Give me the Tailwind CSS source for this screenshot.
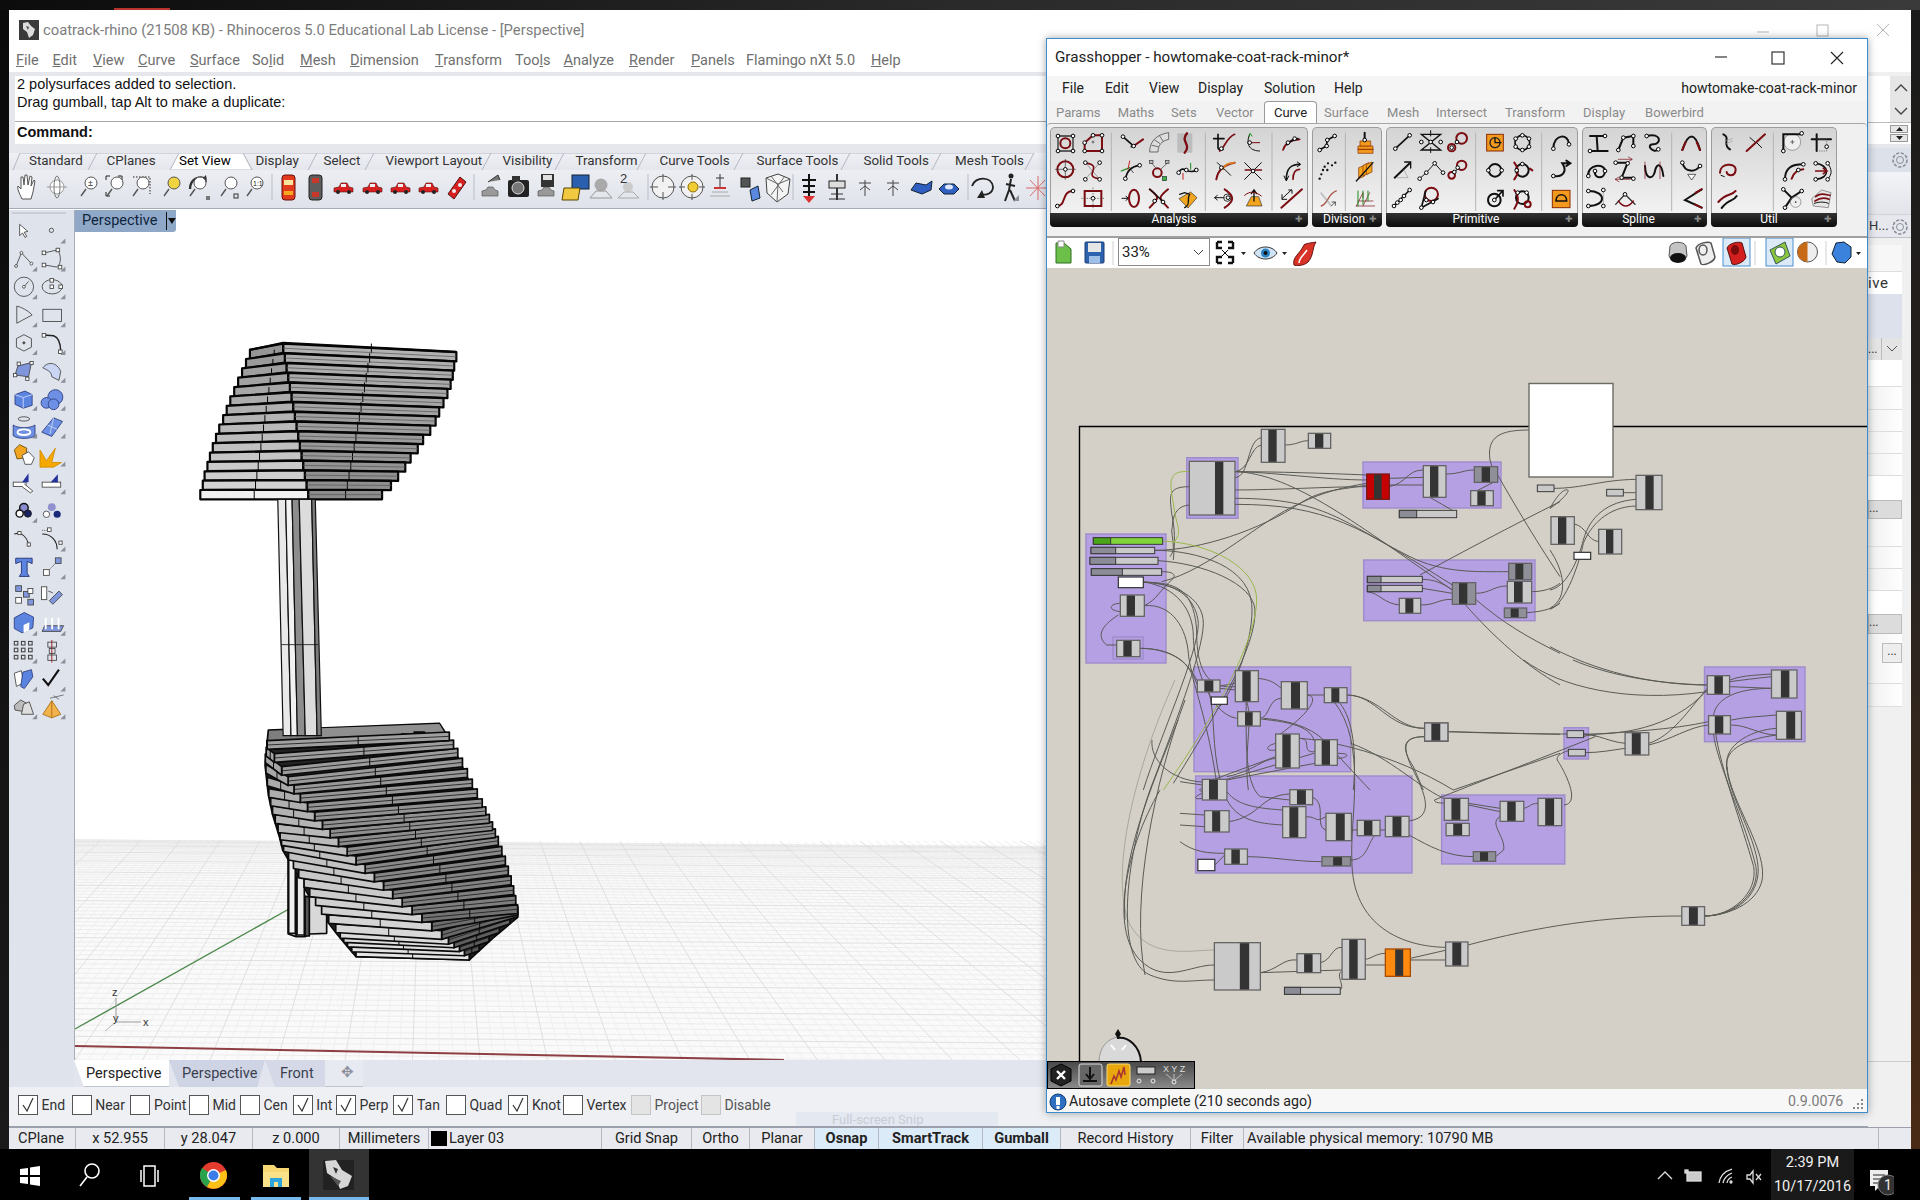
<!DOCTYPE html>
<html>
<head>
<meta charset="utf-8">
<script src="https://cdn.jsdelivr.net/npm/@tailwindcss/browser@4"></script>
</head>
<body class="bg-black">
<div class="relative w-[1920px] h-[1200px] overflow-hidden flex flex-col bg-black [font-family:Roboto,sans-serif] text-[14px] text-[#1c1c1c]">
  <!-- wallpaper strip -->
  <div class="h-[10px] shrink-0 relative bg-linear-to-r from-[#0c0c0c] via-[#2a2a2a] to-[#3a3a3a]">
    <div class="absolute left-[114px] top-[8px] w-[56px] h-[2px] bg-[#b8352d]"></div>
  </div>
  <div class="flex h-[1139px] shrink-0">
    <div class="w-[9px] bg-linear-to-b from-[#0a0a0a] to-[#1a1a1a]"></div>
    <!-- RHINO -->
    <div class="w-[1902px] flex flex-col bg-[#f0f0f0]">
      <div class="h-[40px] bg-white flex items-center pl-[10px] text-[#7d7d7d] text-[14.8px] relative">
        <svg width="20" height="20" viewBox="0 0 20 20" class="mr-[4px]"><rect width="20" height="20" fill="#3a3a3a"/><path d="M4 3 L9 2 L12 6 L16 9 L14 15 L10 18 L8 12 L4 9 Z" fill="#dcdcdc"/><path d="M7 6 L10 7 L9 10 Z" fill="#444"/></svg>
        <span>coatrack-rhino (21508 KB) - Rhinoceros 5.0 Educational Lab License - [Perspective]</span>
        <svg class="absolute left-[1743px] top-[8px]" width="150" height="24" viewBox="0 0 150 24" fill="none" stroke="#b5b5b5"><path d="M5 14 H17"/><rect x="65" y="7" width="11" height="11"/><path d="M125 6 L137 18 M137 6 L125 18"/></svg>
      </div>
      <div class="h-[22px] bg-white flex items-center pl-[7px] text-[14.5px] text-[#6f6f6f] whitespace-nowrap">
        <span class="w-[36.5px]"><u>F</u>ile</span><span class="w-[40.5px]"><u>E</u>dit</span><span class="w-[45px]"><u>V</u>iew</span><span class="w-[52px]"><u>C</u>urve</span><span class="w-[62px]"><u>S</u>urface</span><span class="w-[48px]">So<u>l</u>id</span><span class="w-[50px]"><u>M</u>esh</span><span class="w-[85px]"><u>D</u>imension</span><span class="w-[80px]"><u>T</u>ransform</span><span class="w-[48.5px]">Too<u>l</u>s</span><span class="w-[65.5px]"><u>A</u>nalyze</span><span class="w-[62px]"><u>R</u>ender</span><span class="w-[55px]"><u>P</u>anels</span><span class="w-[125px]">Flamingo nXt 5.0</span><span><u>H</u>elp</span>
      </div>
      <div class="flex h-[1055px]">
        <!-- main column -->
        <div class="w-[1859px] flex flex-col">
          <div class="h-[4px] bg-[#e6e7ec]"></div>
          <div class="h-[68px] bg-[#e6e7ec] pl-[6px]">
            <div class="h-full bg-white flex flex-col [font-family:'Liberation_Sans',sans-serif] text-[14.5px] text-[#111]">
              <div class="h-[46px] pl-[2px] leading-[17.5px] border-b border-[#a8a8a8]">
                <div>2 polysurfaces added to selection.</div>
                <div>Drag gumball, tap Alt to make a duplicate:</div>
              </div>
              <div class="h-[21px] pl-[2px] leading-[20px] font-bold">Command:</div>
            </div>
          </div>
          <div class="h-[9px] bg-[#e6e7ec]"></div>
          <!-- toolbar tabs -->
          <div class="h-[17px] relative bg-linear-to-b from-[#eef0f4] to-[#e4e6ed] text-[13.4px] text-[#333] flex items-center pl-[20px] whitespace-nowrap">
            <svg class="absolute left-0 top-0" width="1040" height="17" viewBox="9 153 1040 17" fill="none" stroke="#b4b8c4"><path d="M13 170 L20 153 H97 M88 170 L97 153 H179 M243 153 H317 M243 153 L252 170 M308 170 L317 153 H374 M365 170 L374 153 H491 M482 170 L491 153 H564 M555 170 L564 153 H646 M637 170 L646 153 H743 M734 170 L743 153 H850 M841 170 L850 153 H941 M932 170 L941 153 H1034 M1025 170 L1034 153"/><path d="M170 170 L179 153 H243 L252 170 Z" fill="#fff"/></svg>
            <span class="relative w-[77.5px]">Standard</span><span class="relative w-[72.5px]">CPlanes</span><span class="relative w-[76.5px] text-black">Set View</span><span class="relative w-[68px]">Display</span><span class="relative w-[62px]">Select</span><span class="relative w-[117px]">Viewport Layout</span><span class="relative w-[73px]">Visibility</span><span class="relative w-[84px]">Transform</span><span class="relative w-[97px]">Curve Tools</span><span class="relative w-[107px]">Surface Tools</span><span class="relative w-[91.6px]">Solid Tools</span><span class="relative">Mesh Tools</span>
          </div>
          <!-- toolbar icons -->
          <div class="h-[39px] bg-linear-to-b from-[#eceef3] to-[#dfe2ea] border-b border-[#a6abb8] relative">
            <svg id="rtools" class="absolute left-0 top-0" width="1037" height="38" viewBox="9 170 1037 38"></svg>
          </div>
          <div class="h-[1px] bg-white"></div>
          <!-- workspace -->
          <div class="flex h-[877px]">
            <div class="w-[65px] bg-[#dfe3ec] shrink-0">
              <svg width="65" height="520" viewBox="9 210 65 520">
                <path d="M12 213 H66" stroke="#b5b8c2"/>
                <g transform="translate(0 200) scale(0.35714)" fill="none" stroke="#444" stroke-width="2.4">
                  <path d="M55 68 L55 100 L63 92 L70 105 L75 102 L68 90 L78 88 Z" fill="#fff"/><circle cx="144" cy="85" r="6"/>
                  <path d="M45 185 L60 148 L88 178"/><path d="M125 148 L160 140 C172 150 172 180 160 188 L125 182" /><g fill="#fff"><rect x="118" y="143" width="10" height="10"/><rect x="157" y="135" width="10" height="10"/><rect x="118" y="177" width="10" height="10"/><rect x="163" y="183" width="10" height="10"/><circle cx="45" cy="185" r="4"/><circle cx="60" cy="148" r="4"/><circle cx="88" cy="178" r="4"/></g>
                  <circle cx="67" cy="243" r="27"/><path d="M67 243 L80 228"/><circle cx="67" cy="243" r="4" fill="#fff"/><ellipse cx="146" cy="243" rx="28" ry="20"/><g fill="#fff"><rect x="140" y="220" width="10" height="10"/><rect x="140" y="238" width="10" height="10"/><rect x="165" y="238" width="10" height="10"/></g>
                  <path d="M47 297 L47 345 L90 322 C80 310 60 300 47 297"/><rect x="120" y="306" width="52" height="34"/>
                  <path d="M67 377 L88 388 L88 412 L67 423 L46 412 L46 388 Z"/><circle cx="67" cy="400" r="3" fill="#444"/><path d="M122 378 L150 380 C165 385 170 400 170 425" stroke="#222" stroke-width="4"/><g fill="#fff"><rect x="118" y="374" width="10" height="10"/><rect x="164" y="420" width="10" height="10"/></g>
                  <path d="M50 465 L88 455 L80 495 L42 490Z" fill="#7f96dc"/><g fill="#fff"><rect x="48" y="454" width="9" height="9"/><rect x="84" y="452" width="9" height="9"/><rect x="38" y="486" width="9" height="9"/><rect x="72" y="496" width="9" height="9"/></g><path d="M120 470 C135 450 160 455 170 480 L165 505 L145 495 C145 480 130 475 120 470" fill="#c9d5f3"/>
                  <path d="M42 545 L70 535 L90 545 L90 575 L65 583 L42 572 Z" fill="#5b83e0" stroke="#2b3d7c"/><path d="M42 545 L65 553 L90 545 M65 553 L65 583" stroke="#cfdcff"/><circle cx="155" cy="552" r="21" fill="#6d90e4" stroke="#2b3d7c"/><circle cx="130" cy="568" r="15" fill="#6d90e4" stroke="#2b3d7c"/><circle cx="150" cy="572" r="15" fill="#6d90e4" stroke="#2b3d7c"/>
                  <ellipse cx="67" cy="613" rx="16" ry="6"/><path d="M37 630 C50 640 85 640 98 630 L98 660 C85 670 50 670 37 660Z" fill="#6d90e4" stroke="#2b3d7c"/><ellipse cx="67" cy="650" rx="18" ry="8" stroke="#fff" stroke-width="5"/><path d="M117 650 L150 610 L175 620 L145 662Z" fill="#6d90e4" stroke="#2b3d7c"/><path d="M133 630 L160 642 M150 610 L140 655" stroke="#c9d5f3"/>
                  <path d="M40 700 L55 685 L75 695 L72 722 L48 725 Z" fill="#f2a51e" stroke="#6b4a00"/><path d="M62 715 L80 705 L96 722 L88 740 L70 740 Z" fill="#fff"/><path d="M112 748 L112 700 L130 730 L155 695 L145 735 L172 735 L150 748Z" fill="#f5a800" stroke="#d08c00"/>
                  <rect x="37" y="790" width="36" height="12" fill="#fff"/><path d="M62 790 L80 765 L80 790Z" fill="#26329c" stroke="none"/><path d="M68 795 L92 815 L85 820 L62 803" fill="#fff"/><rect x="118" y="790" width="52" height="14" fill="#fff"/><path d="M142 790 L162 768 L162 790Z" fill="#26329c" stroke="none"/>
                  <circle cx="67" cy="862" r="12" fill="#8a8ad0" stroke="#111" stroke-width="4"/><circle cx="55" cy="878" r="10" fill="#fff" stroke="#111" stroke-width="4"/><circle cx="78" cy="878" r="10" fill="#1b2360" stroke="#111"/><circle cx="145" cy="860" r="11" fill="#9090d0" stroke="none"/><circle cx="130" cy="880" r="9" fill="#fff"/><circle cx="160" cy="880" r="10" fill="#1b2a78" stroke="none"/>
                  <path d="M40 935 L55 932 C70 940 80 955 80 970" stroke="#222" stroke-width="3"/><g fill="#fff"><rect x="50" y="928" width="9" height="9"/><rect x="76" y="960" width="9" height="9"/></g><path d="M118 925 H135" stroke-dasharray="3 3"/><path d="M118 935 C145 935 160 955 160 978" stroke="#222" stroke-width="3"/><rect x="133" y="918" width="10" height="10" fill="#fff"/><rect x="165" y="955" width="9" height="9" fill="#fff"/>
                  <path d="M44 1003 L90 1003 L90 1018 L76 1012 L76 1045 L82 1054 L54 1054 L60 1045 L60 1012 L44 1018Z" fill="#5b83e0" stroke="#1f2d6a"/><rect x="122" y="1035" width="16" height="16" fill="#fff"/><rect x="155" y="1002" width="16" height="16" fill="#7f96dc"/><path d="M138 1035 L155 1018" stroke-dasharray="3 2"/>
                  <rect x="44" y="1080" width="16" height="16" fill="#7f96dc"/><rect x="66" y="1096" width="16" height="16" fill="#7f96dc"/><rect x="78" y="1088" width="14" height="14" fill="#fff"/><rect x="44" y="1113" width="16" height="16" fill="#fff"/><rect x="78" y="1118" width="16" height="16" fill="#7f96dc"/><rect x="116" y="1083" width="15" height="36" fill="#fff"/><path d="M138 1122 L165 1095 L175 1105 L148 1132Z" fill="#7f96dc"/><path d="M135 1095 L148 1100"/>
                  <path d="M40 1170 L68 1155 L94 1168 L92 1198 L62 1212 L40 1200Z" fill="#5b83e0" stroke="#2b3d7c"/><path d="M66 1190 L82 1182 L82 1205 L66 1212Z" fill="#fff" stroke="none"/><path d="M118 1208 L170 1208 L178 1192 L125 1192Z" fill="#7f96dc"/><path d="M128 1202 V1170 M146 1202 V1170 M164 1202 V1170" stroke="#fff" stroke-width="5"/>
                  <g stroke-width="3"><rect x="40" y="1236" width="10" height="10"/><rect x="60" y="1236" width="10" height="10"/><rect x="80" y="1236" width="10" height="10"/><rect x="40" y="1255" width="10" height="10"/><rect x="60" y="1255" width="10" height="10"/><rect x="80" y="1255" width="10" height="10"/><rect x="40" y="1275" width="10" height="10"/><rect x="60" y="1275" width="10" height="10"/><rect x="80" y="1275" width="10" height="10"/></g><path d="M145 1232 V1295" stroke="#b03030" stroke-width="3"/><rect x="134" y="1238" width="24" height="14"/><rect x="138" y="1256" width="16" height="14"/><rect x="134" y="1274" width="24" height="15"/>
                  <path d="M40 1325 L60 1318 L66 1352 L46 1362Z" fill="#fff"/><path d="M64 1322 L88 1315 L92 1335 L68 1368 L58 1362Z" fill="#5b83e0" stroke="#2b3d7c"/><path d="M120 1340 L135 1358 L165 1315" stroke="#111" stroke-width="6"/>
                  <path d="M40 1415 L58 1400 L76 1410 L64 1432 L42 1428 Z" fill="#bbb"/><path d="M66 1412 L82 1405 L94 1440 L60 1440 Z" fill="#ddd"/><path d="M145 1402 L170 1440 L145 1450 L120 1440 Z" fill="#f2b34a" stroke="#a86a10"/><path d="M145 1402 V1450" stroke="#a86a10"/><path d="M140 1395 L178 1386 M150 1388 L165 1398" stroke="#666"/>
                </g>
                <g id="tris" transform="translate(0 200) scale(0.35714)" fill="#8a8f99"></g>
              </svg>
            </div>
            <div class="flex-1 flex flex-col">
              <div class="h-[850px] relative bg-white overflow-hidden border-l border-[#a8acb8]">
                <svg id="vp" class="absolute left-0 top-0" width="1000" height="850" viewBox="74 210 1000 850"></svg>
                <div class="absolute left-0 top-0 w-[101px] h-[22px] bg-[#8fa8c8] rounded-br-[3px] flex items-center pl-[7px] text-[14.5px] text-[#10243c]">
                  <span class="w-[86px]">Perspective</span>
                  <span class="w-[1px] h-[18px] bg-[#111]"></span>
                  <svg width="8" height="6" viewBox="0 0 8 6" class="ml-[1px]"><path d="M0 0 H8 L4 6 Z" fill="#111"/></svg>
                </div>
              </div>
              <div class="h-[27px] bg-[#e2e5ee] flex text-[14.5px] text-[#3a3f50]">
                <div class="w-[95px] bg-white pl-[12px] pt-[1px] flex items-center border-b border-[#c0c4d0] [clip-path:polygon(0_0,100%_0,100%_100%,10px_100%)] text-[#222]">Perspective</div>
                <div class="w-[96px] bg-[#cfd4e4] pl-[13px] pt-[1px] flex items-center [clip-path:polygon(0_0,100%_0,92%_100%,10px_100%)]">Perspective</div>
                <div class="w-[60px] bg-[#d5d9e7] pl-[15px] pt-[1px] flex items-center [clip-path:polygon(0_0,100%_0,100%_100%,10px_100%)]">Front</div>
                <div class="w-[38px] bg-[#e8eaf1] pl-[16px] flex items-center border-b border-[#c0c4d0] text-[#8b8f9c]">✥</div>
              </div>
            </div>
          </div>
          <!-- osnap -->
          <div class="h-[40px] bg-[#eff0f3] flex items-center pl-[9px] pb-[3px] text-[14px] text-[#333] whitespace-nowrap relative border-b border-[#9ba0ac]">
            <div class="w-[53.7px] flex items-center gap-[3.5px]"><span class="w-[20px] h-[20px] bg-white border border-[#555] flex items-center justify-center"><svg width="14" height="16" viewBox="0 0 14 16" fill="none" stroke="#333" stroke-width="1.2"><path d="M2 8 L6 14 L12 1"/></svg></span>End</div>
            <div class="w-[58.8px] flex items-center gap-[3.5px]"><span class="w-[20px] h-[20px] bg-white border border-[#555]"></span>Near</div>
            <div class="w-[58.5px] flex items-center gap-[3.5px]"><span class="w-[20px] h-[20px] bg-white border border-[#555]"></span>Point</div>
            <div class="w-[51px] flex items-center gap-[3.5px]"><span class="w-[20px] h-[20px] bg-white border border-[#555]"></span>Mid</div>
            <div class="w-[52.8px] flex items-center gap-[3.5px]"><span class="w-[20px] h-[20px] bg-white border border-[#555]"></span>Cen</div>
            <div class="w-[43.2px] flex items-center gap-[3.5px]"><span class="w-[20px] h-[20px] bg-white border border-[#555] flex items-center justify-center"><svg width="14" height="16" viewBox="0 0 14 16" fill="none" stroke="#333" stroke-width="1.2"><path d="M2 8 L6 14 L12 1"/></svg></span>Int</div>
            <div class="w-[57.5px] flex items-center gap-[3.5px]"><span class="w-[20px] h-[20px] bg-white border border-[#555] flex items-center justify-center"><svg width="14" height="16" viewBox="0 0 14 16" fill="none" stroke="#333" stroke-width="1.2"><path d="M2 8 L6 14 L12 1"/></svg></span>Perp</div>
            <div class="w-[52.5px] flex items-center gap-[3.5px]"><span class="w-[20px] h-[20px] bg-white border border-[#555] flex items-center justify-center"><svg width="14" height="16" viewBox="0 0 14 16" fill="none" stroke="#333" stroke-width="1.2"><path d="M2 8 L6 14 L12 1"/></svg></span>Tan</div>
            <div class="w-[62.5px] flex items-center gap-[3.5px]"><span class="w-[20px] h-[20px] bg-white border border-[#555]"></span>Quad</div>
            <div class="w-[54.5px] flex items-center gap-[3.5px]"><span class="w-[20px] h-[20px] bg-white border border-[#555] flex items-center justify-center"><svg width="14" height="16" viewBox="0 0 14 16" fill="none" stroke="#333" stroke-width="1.2"><path d="M2 8 L6 14 L12 1"/></svg></span>Knot</div>
            <div class="w-[68px] flex items-center gap-[3.5px]"><span class="w-[20px] h-[20px] bg-white border border-[#555]"></span>Vertex</div>
            <div class="w-[70px] flex items-center gap-[3.5px] text-[#555]"><span class="w-[20px] h-[20px] bg-[#e4e4e4] border border-[#c4c4c4]"></span>Project</div>
            <div class="flex items-center gap-[3.5px] text-[#555]"><span class="w-[20px] h-[20px] bg-[#e4e4e4] border border-[#c4c4c4]"></span>Disable</div>
            <div class="absolute left-[787px] top-[25px] w-[202px] h-[14px] bg-[#e4e8f1] text-[#c9ccd6] pl-[36px] text-[13px] leading-[16px] overflow-hidden">Full-screen Snip</div>
          </div>
        </div>
        <!-- right column behind Grasshopper -->
        <div class="w-[43px] flex flex-col bg-[#f0f0f0] overflow-hidden text-[#333]">
          <div class="h-[50px] flex"><div class="w-[22px] bg-white mt-[4px]"></div><div class="w-[21px] bg-[#e6e6e6] mt-[4px] flex flex-col items-center justify-around"><svg width="14" height="8" viewBox="0 0 14 8" fill="none" stroke="#444" stroke-width="1.4"><path d="M1 7 L7 1 L13 7"/></svg><svg width="14" height="8" viewBox="0 0 14 8" fill="none" stroke="#444" stroke-width="1.4"><path d="M1 1 L7 7 L13 1"/></svg></div></div>
          <div class="h-[22px] flex bg-white border-t border-[#bbb]"><div class="w-[22px]"></div><div class="flex flex-col gap-[1px] pt-[2px]"><div class="w-[18px] h-[8px] bg-[#e6e6e6] border border-[#999] flex items-center justify-center"><svg width="7" height="4" viewBox="0 0 7 4"><path d="M0 4 L3.5 0 L7 4Z" fill="#222"/></svg></div><div class="w-[18px] h-[8px] bg-[#e6e6e6] border border-[#999] flex items-center justify-center"><svg width="7" height="4" viewBox="0 0 7 4"><path d="M0 0 L3.5 4 L7 0Z" fill="#222"/></svg></div></div></div>
          <div class="h-[4px] bg-[#e6e7ec]"></div>
          <div class="h-[24px] bg-[#dde1ea] flex justify-end items-center pr-[2px]"><svg width="18" height="18" viewBox="0 0 18 18" fill="none" stroke="#8a8e98"><circle cx="9" cy="9" r="3.5"/><circle cx="9" cy="9" r="7" stroke-dasharray="3.2 1.6" stroke-width="1.6"/></svg></div>
          <div class="h-[43px] bg-linear-to-b from-[#f3f4f7] to-[#e2e4ea] border-b border-[#cfd2da]"></div>
          <div class="h-[23px] bg-[#e6e8ee] border-b border-[#bcc0ca] relative flex items-center text-[13px] text-[#333]"><span class="pl-[1px]">H...</span><svg class="absolute right-[2px] top-[3px]" width="18" height="18" viewBox="0 0 18 18" fill="none" stroke="#8a8e98"><circle cx="9" cy="9" r="3.5"/><circle cx="9" cy="9" r="7" stroke-dasharray="3.2 1.6" stroke-width="1.6"/></svg></div>
          <div class="h-[7px]"></div>
          <div class="w-[34px] h-[27px] bg-[#f7f7f7] border-b border-[#ddd]"></div>
          <div class="w-[34px] h-[22px] bg-white text-[15px] leading-[23px] tracking-[0.6px]">ive</div>
          <div class="w-[34px] h-[44px] bg-[#dde1ec]"></div>
          <div class="w-[34px] h-[22px] bg-[#e4e4e4] flex items-center justify-between text-[12px]"><span>...</span><span class="w-[21px] h-[22px] border-l border-[#bbb] flex items-center justify-center"><svg width="10" height="6" viewBox="0 0 10 6" fill="none" stroke="#555"><path d="M0 0 L5 5 L10 0"/></svg></span></div>
          <div class="w-[34px] h-[27px] bg-white border-b border-[#ddd]"></div>
          <div class="w-[34px] h-[23px] bg-linear-to-r from-[#f0f0f0] to-white border-b border-[#ddd]"></div>
          <div class="w-[34px] h-[22px] bg-linear-to-r from-[#f0f0f0] to-white border-b border-[#ddd]"></div>
          <div class="w-[34px] h-[22px] bg-linear-to-r from-[#f0f0f0] to-white border-b border-[#ddd]"></div>
          <div class="w-[34px] h-[22px] bg-linear-to-r from-[#f0f0f0] to-white border-b border-[#ddd]"></div>
          <div class="w-[34px] h-[24px] bg-white"></div>
          <div class="w-[34px] h-[19px] bg-[#dcdcdc] border border-[#bbb] text-[12px] leading-[14px]">...</div>
          <div class="w-[34px] h-[28px] bg-linear-to-r from-[#f0f0f0] to-white border-b border-[#ddd]"></div>
          <div class="w-[34px] h-[22px] bg-linear-to-r from-[#f0f0f0] to-white border-b border-[#ddd]"></div>
          <div class="w-[34px] h-[22px] bg-linear-to-r from-[#f0f0f0] to-white border-b border-[#ddd]"></div>
          <div class="w-[34px] h-[23px] bg-white"></div>
          <div class="w-[34px] h-[20px] bg-[#dcdcdc] border border-[#bbb] text-[12px] leading-[14px]">...</div>
          <div class="w-[34px] h-[29px] bg-linear-to-r from-[#f0f0f0] to-white flex justify-end items-end"><div class="w-[20px] h-[20px] bg-[#eeeeee] border border-[#bbb] text-[12px] leading-[14px] text-center">...</div></div>
          <div class="w-[34px] h-[21px] bg-linear-to-r from-[#f0f0f0] to-white border-b border-[#ddd]"></div>
          <div class="w-[34px] h-[23px] bg-linear-to-r from-[#f0f0f0] to-white border-b border-[#ddd]"></div>
          <div class="h-[355px] border-b border-[#ccc]"></div>
        </div>
      </div>
      <!-- status -->
      <div class="h-[22px] bg-[#e8eaef] border-t border-[#9ba0ac] flex items-center text-[14.6px] text-[#222] whitespace-nowrap">
        <div class="w-[67px] pl-[9px] h-full flex items-center border-r border-[#b5b9c4]">CPlane</div>
        <div class="w-[89px] h-full flex items-center justify-center border-r border-[#b5b9c4]">x 52.955</div>
        <div class="w-[88px] h-full flex items-center justify-center border-r border-[#b5b9c4]">y 28.047</div>
        <div class="w-[87px] h-full flex items-center justify-center border-r border-[#b5b9c4]">z 0.000</div>
        <div class="w-[89px] h-full flex items-center justify-center border-r border-[#b5b9c4]">Millimeters</div>
        <div class="w-[173px] h-full flex items-center pl-[2px] border-r border-[#b5b9c4]"><span class="w-[16px] h-[15px] bg-black mr-[2px]"></span>Layer 03</div>
        <div class="w-[90px] h-full flex items-center justify-center border-r border-[#b5b9c4]">Grid Snap</div>
        <div class="w-[58px] h-full flex items-center justify-center border-r border-[#b5b9c4]">Ortho</div>
        <div class="w-[65px] h-full flex items-center justify-center border-r border-[#b5b9c4]">Planar</div>
        <div class="w-[64px] h-full flex items-center justify-center border-r border-[#b5b9c4] bg-[#dbebf8] font-bold">Osnap</div>
        <div class="w-[104px] h-full flex items-center justify-center border-r border-[#b5b9c4] bg-[#dbebf8] font-bold">SmartTrack</div>
        <div class="w-[78px] h-full flex items-center justify-center border-r border-[#b5b9c4] bg-[#dbebf8] font-bold">Gumball</div>
        <div class="w-[130px] h-full flex items-center justify-center border-r border-[#b5b9c4]">Record History</div>
        <div class="w-[53px] h-full flex items-center justify-center border-r border-[#b5b9c4]">Filter</div>
        <div class="w-[635px] h-full flex items-center pl-[3px] border-r border-[#b5b9c4]">Available physical memory: 10790 MB</div>
      </div>
    </div>
    <div class="w-[9px] bg-linear-to-b from-[#1a1a1a] via-[#2a2420] to-[#4a2a14]"></div>
  </div>
  <!-- taskbar -->
  <div class="h-[51px] shrink-0 bg-black relative text-white">
    <svg width="400" height="51" viewBox="0 1149 400 51" class="absolute left-0 top-0">
      <path d="M20 1169 L28 1168 V1175 H20 Z M30 1167.500 L40 1166 V1175 H30 Z M20 1177 H28 V1184 L20 1183 Z M30 1177 H40 V1186 L30 1184.500 Z" fill="#fff"/>
      <circle cx="92" cy="1171" r="7" fill="none" stroke="#fff" stroke-width="1.6"/><path d="M87 1177 L80 1186" stroke="#fff" stroke-width="1.6"/>
      <rect x="144" y="1166" width="11" height="20" fill="none" stroke="#fff" stroke-width="1.5"/><path d="M141 1170 V1182 M158 1170 V1182" stroke="#fff" stroke-width="1.5"/>
      <circle cx="213.500" cy="1175.500" r="13.500" fill="#e33b2e"/><path d="M213.500 1175.500 L202 1168 A13.500 13.500 0 0 0 207 1187 Z" fill="#2ba24c"/><path d="M213.500 1175.500 L226 1170 A13.500 13.500 0 0 1 207 1187 Z" fill="#fbc116"/><circle cx="213.500" cy="1175.500" r="6.500" fill="#fff"/><circle cx="213.500" cy="1175.500" r="5" fill="#3b7de8"/>
      <path d="M263 1165 H274 L277 1168 H289 V1187 H263 Z" fill="#f7d774"/><path d="M263 1172 H289 V1187 H263 Z" fill="#fbe08a"/><rect x="270" y="1178" width="12" height="9" fill="#2fa3dc"/><rect x="274" y="1182" width="4" height="5" fill="#fbe08a"/>
      <rect x="189" y="1197" width="51" height="3" fill="#76b9ed"/><rect x="251" y="1197" width="50" height="3" fill="#76b9ed"/>
      <rect x="309" y="1149" width="60" height="48" fill="#333"/><rect x="309" y="1197" width="60" height="3" fill="#76b9ed"/>
      <rect x="323" y="1160" width="31" height="30" fill="#222"/><path d="M325 1161 L336 1160 L342 1170 L352 1176 L348 1186 L340 1189 L336 1179 L327 1173 Z" fill="#d6d6d6"/><path d="M333 1167 L338 1169 L336 1174Z" fill="#333"/><path d="M330 1176 L341 1181 L338 1186Z" fill="#555"/>
    </svg>
    <svg class="absolute left-[1650px] top-0" width="120" height="51" viewBox="1650 1149 120 51" fill="none" stroke="#ddd" stroke-width="1.3">
      <path d="M1658 1179 L1665 1172 L1672 1179"/>
      <rect x="1687" y="1172" width="14" height="9" fill="#ccc"/><rect x="1685" y="1170" width="3" height="3" fill="#ccc"/>
      <path d="M1719 1183 C1720 1176 1725 1171 1732 1169 M1723 1183 C1724 1178 1727 1175 1732 1173 M1727 1183 C1727 1181 1729 1178 1732 1177"/><circle cx="1731" cy="1182" r="1" fill="#ddd"/>
      <path d="M1747 1175 H1750 L1753 1171 V1183 L1750 1179 H1747 Z"/><path d="M1756 1174 L1761 1180 M1761 1174 L1756 1180"/>
    </svg>
    <div class="absolute left-[1771px] top-0 w-[83px] h-[51px] bg-[#1a1a1a] flex flex-col items-center justify-center text-[14.5px] leading-[24px] text-[#f0f0f0]"><span>2:39 PM</span><span>10/17/2016</span></div>
    <svg class="absolute left-[1868px] top-[18px]" width="26" height="30" viewBox="0 0 26 30"><rect x="2" y="3" width="18" height="16" fill="#eee"/><path d="M5 8 H17 M5 12 H17 M5 16 H12" stroke="#222"/><path d="M7 19 V24 L12 19" fill="#eee"/><circle cx="20" cy="18" r="10" fill="#333" stroke="#777"/></svg>
    <span class="absolute left-[1884px] top-[27px] text-[14px] text-[#eee] leading-[18px]">1</span>
  </div>

  <!-- GRASSHOPPER window -->
  <div class="absolute left-[1046px] top-[38px] w-[822px] h-[1075px] border border-[#3a8ccf] bg-[#f0f0f0] flex flex-col shadow-[0_0_8px_rgba(0,0,0,0.35)]">
    <div class="h-[37px] bg-white flex items-center pl-[8px] text-[15.2px] text-[#222] relative whitespace-nowrap">
      <span>Grasshopper - howtomake-coat-rack-minor*</span>
      <svg class="absolute left-[666px] top-[10px]" width="140" height="18" viewBox="0 0 140 18" fill="none" stroke="#222" stroke-width="1.1"><path d="M2 8 H14"/><rect x="59" y="3" width="12" height="12"/><path d="M118 3 L130 15 M130 3 L118 15"/></svg>
    </div>
    <div class="h-[25px] bg-[#f5f5f5] flex items-center pl-[15px] text-[14px] text-[#222] relative whitespace-nowrap">
      <span class="w-[43px]">File</span><span class="w-[44px]">Edit</span><span class="w-[49px]">View</span><span class="w-[66px]">Display</span><span class="w-[70px]">Solution</span><span>Help</span>
      <span class="absolute right-[10px] text-[14.1px]">howtomake-coat-rack-minor</span>
    </div>
    <div class="h-[22px] bg-[#f2f2f2] flex items-center pl-[9px] pt-[2px] text-[13px] text-[#8a8a8a] whitespace-nowrap">
      <span class="w-[61.7px]">Params</span><span class="w-[53.4px]">Maths</span><span class="w-[45px]">Sets</span><span class="w-[48px]">Vector</span>
      <span class="w-[53px] h-[22px] -mt-[2px] bg-white border border-b-0 border-[#9a9a9a] rounded-t-[4px] flex items-center justify-center text-[#222] z-10">Curve</span>
      <span class="w-[70px] pl-[7px]">Surface</span><span class="w-[49px]">Mesh</span><span class="w-[69px]">Intersect</span><span class="w-[78px]">Transform</span><span class="w-[62px]">Display</span><span>Bowerbird</span>
    </div>
    <!-- ribbon -->
    <div class="h-[113px] relative bg-[#f0f0f0] border-t border-[#a6a6a6] rounded-t-[4px] flex pl-[3px] pt-[3px] gap-[4px]">
      <div class="w-[258px] h-[100px] flex flex-col"><div class="h-[86px] bg-linear-to-b from-[#d4d4d4] to-[#f2f2f2] border border-b-0 border-[#9c9c9c] rounded-t-[5px]"></div><div class="h-[14px] bg-linear-to-b from-[#333] to-[#0c0c0c] rounded-b-[4px] text-white text-[12px] leading-[13px] text-center pr-[10px] relative">Analysis<span class="absolute right-[5px] text-[#888] text-[9px]">✚</span></div></div>
      <div class="w-[70px] h-[100px] flex flex-col"><div class="h-[86px] bg-linear-to-b from-[#d4d4d4] to-[#f2f2f2] border border-b-0 border-[#9c9c9c] rounded-t-[5px]"></div><div class="h-[14px] bg-linear-to-b from-[#333] to-[#0c0c0c] rounded-b-[4px] text-white text-[12px] leading-[13px] pl-[11px] relative">Division<span class="absolute right-[5px] text-[#888] text-[9px]">✚</span></div></div>
      <div class="w-[192px] h-[100px] flex flex-col"><div class="h-[86px] bg-linear-to-b from-[#d4d4d4] to-[#f2f2f2] border border-b-0 border-[#9c9c9c] rounded-t-[5px]"></div><div class="h-[14px] bg-linear-to-b from-[#333] to-[#0c0c0c] rounded-b-[4px] text-white text-[12px] leading-[13px] text-center pr-[12px] relative">Primitive<span class="absolute right-[5px] text-[#888] text-[9px]">✚</span></div></div>
      <div class="w-[125px] h-[100px] flex flex-col"><div class="h-[86px] bg-linear-to-b from-[#d4d4d4] to-[#f2f2f2] border border-b-0 border-[#9c9c9c] rounded-t-[5px]"></div><div class="h-[14px] bg-linear-to-b from-[#333] to-[#0c0c0c] rounded-b-[4px] text-white text-[12px] leading-[13px] text-center pr-[12px] relative">Spline<span class="absolute right-[5px] text-[#888] text-[9px]">✚</span></div></div>
      <div class="w-[126px] h-[100px] flex flex-col"><div class="h-[86px] bg-linear-to-b from-[#d4d4d4] to-[#f2f2f2] border border-b-0 border-[#9c9c9c] rounded-t-[5px]"></div><div class="h-[14px] bg-linear-to-b from-[#333] to-[#0c0c0c] rounded-b-[4px] text-white text-[12px] leading-[13px] text-center pr-[10px] relative">Util<span class="absolute right-[5px] text-[#888] text-[9px]">✚</span></div></div>
      <svg id="ribbon" class="absolute left-0 top-0" width="820" height="90" viewBox="1047 123 820 90"></svg>
    </div>
    <div class="h-[2px] bg-[#a0a0a0]"></div>
    <!-- GH toolbar -->
    <div class="h-[30px] bg-white flex items-center relative">
      <svg width="820" height="30" viewBox="1047 238 820 30" class="absolute left-0 top-0">
        <path d="M1056 243 H1064 L1071 249 V263 H1056 Z" fill="#6cc04a" stroke="#2c6e1f"/><path d="M1058 241 H1064 V247 H1058Z" fill="#fff" stroke="#888"/>
        <rect x="1085" y="242" width="19" height="21" rx="1" fill="#2d62ac" stroke="#1b3d75"/><rect x="1088" y="243" width="13" height="9" fill="#e6e6e6"/><rect x="1089" y="256" width="11" height="7" fill="#9ec0e8"/>
        <path d="M1113 241 V265 M1755 241 V265 M1826 241 V265" stroke="#d0d0d0"/>
        <path d="M1217 242 V248 H1222 M1233 242 V248 H1228 M1217 263 V257 H1222 M1233 263 V257 H1228 M1217 242 H1222 M1228 242 H1233 M1217 263 H1222 M1228 263 H1233" fill="none" stroke="#111" stroke-width="2.4"/><path d="M1222 250 L1228 256 M1228 250 L1222 256" stroke="#111"/>
        <path d="M1241 252 H1246 L1243.500 255Z M1282 252 H1287 L1284.500 255Z M1856 252 H1861 L1858.500 255Z" fill="#222"/>
        <path d="M1254 253 C1259 245 1272 245 1277 253 C1272 261 1259 261 1254 253Z" fill="#cfe3f5" stroke="#333"/><circle cx="1265.500" cy="253" r="4.500" fill="#2a83c4"/><circle cx="1265.500" cy="253" r="2" fill="#111"/>
        <path d="M1294 265 C1292 257 1300 254 1304 245 C1306 243 1312 243 1316 242 C1312 248 1314 255 1308 262 C1304 266 1296 266 1294 265Z" fill="#d83326" stroke="#611"/><path d="M1299 263 C1299 258 1304 255 1307 250" stroke="#fff" stroke-width="1.5" fill="none"/>
        <path d="M1670 246 C1672 241 1684 241 1686 246 L1687 256 C1685 263 1671 263 1669 256Z" fill="#c4c4c4" stroke="#555"/><ellipse cx="1678" cy="258" rx="8" ry="5" fill="#111"/>
        <path d="M1696 248 C1698 243 1708 241 1711 243 L1715 257 C1714 262 1704 266 1701 264Z" fill="#eee" stroke="#555" stroke-width="1.500"/><ellipse cx="1703" cy="250" rx="4" ry="5" fill="none" stroke="#555" stroke-width="1.500"/>
        <rect x="1723" y="238" width="27" height="28" fill="#dce9f6" stroke="#4a90d0"/><path d="M1727 248 C1729 243 1739 241 1742 243 L1746 257 C1745 262 1735 266 1732 264Z" fill="#d41f1f" stroke="#511"/><ellipse cx="1735" cy="250" rx="4" ry="5" fill="#7a0c0c"/>
        <rect x="1766" y="238" width="27" height="28" fill="#dce9f6" stroke="#4a90d0"/><path d="M1770 250 L1785 242 L1790 256 L1776 264Z" fill="#8cc63f" stroke="#355"/><circle cx="1780" cy="252" r="5" fill="#fff" stroke="#355"/>
        <circle cx="1807.500" cy="252" r="10" fill="#eee" stroke="#555"/><path d="M1807.500 242 A10 10 0 0 0 1807.500 262Z" fill="#c76a16"/>
        <path d="M1836 243 L1844 242 L1851 247 L1851 257 L1845 263 L1837 262 L1832 254Z" fill="#3a82dc" stroke="#123"/>
      </svg>
      <div class="absolute left-[71px] top-[0px] w-[92px] h-[28px] bg-white border border-[#8a8a8a] flex items-center justify-between pl-[3px] pr-[6px] text-[15px] text-[#222]"><span>33%</span><svg width="9" height="5" viewBox="0 0 9 5" fill="none" stroke="#444"><path d="M0 0 L4.500 4.500 L9 0"/></svg></div>
    </div>
    <!-- canvas -->
    <div class="h-[821px] relative bg-[#d4d0c8] overflow-hidden">
      <svg id="gh" class="absolute left-0 top-0" width="820" height="821" viewBox="1047 268 820 821"></svg>
      <div class="absolute left-0 top-[793px] w-[148px] h-[28px] bg-linear-to-b from-[#4a4a4a] to-[#8a8a8a] border border-black">
        <svg width="146" height="26" viewBox="1048 1062 146 26">
          <path d="M1061 1064 L1071 1069 V1081 L1061 1086 L1051 1081 V1069Z" fill="#222" stroke="#000"/><path d="M1057 1071 L1065 1079 M1065 1071 L1057 1079" stroke="#fff" stroke-width="2.4"/>
          <rect x="1079" y="1064" width="23" height="22" rx="2" fill="#666" stroke="#ddd"/><path d="M1090 1067 V1078 M1086 1074 L1090 1079 L1094 1074 M1083 1081 H1097" stroke="#111" stroke-width="2" fill="none"/>
          <rect x="1107" y="1064" width="23" height="22" rx="2" fill="#e8a70c" stroke="#f7dc7a"/><path d="M1111 1084 L1114 1076 L1116 1080 L1119 1071 L1121 1077 L1124 1067 L1125 1075" stroke="#a33" stroke-width="1.6" fill="none"/>
          <rect x="1137" y="1067" width="18" height="7" fill="#ccc" stroke="#222"/><circle cx="1139" cy="1081" r="2" fill="none" stroke="#eee"/><circle cx="1153" cy="1081" r="2" fill="none" stroke="#eee"/>
          <circle cx="1174" cy="1082" r="2" fill="none" stroke="#eee"/><path d="M1166 1074 L1173 1080 M1174 1074 V1080 M1182 1074 L1175 1080" stroke="#bbb"/>
          <text x="1163" y="1072" font-size="9" fill="#ddd" font-family="Liberation Sans">X Y Z</text>
        </svg>
      </div>
    </div>
    <!-- status -->
    <div class="h-[23px] bg-[#f7f7f7] flex items-center pt-[3px] text-[14.2px] text-[#222] relative whitespace-nowrap">
      <svg width="18" height="18" viewBox="0 0 18 18" class="ml-[2px] mr-[2px]"><circle cx="9" cy="9" r="8" fill="#2f6fc0" stroke="#123f7a"/><path d="M7 4 H11 V12 H7Z" fill="#fff"/><rect x="7.500" y="13" width="3" height="3" fill="#fff"/></svg>
      <span>Autosave complete (210 seconds ago)</span>
      <span class="absolute left-[741px] text-[#7b7b7b]">0.9.0076</span>
      <svg class="absolute right-[3px] bottom-[3px]" width="11" height="10" viewBox="0 0 11 10" fill="#8a8a8a"><rect x="8" y="0" width="2" height="2"/><rect x="4" y="4" width="2" height="2"/><rect x="8" y="4" width="2" height="2"/><rect x="0" y="8" width="2" height="2"/><rect x="4" y="8" width="2" height="2"/><rect x="8" y="8" width="2" height="2"/></svg>
    </div>
  </div>
</div>

<script>
/* ------- helpers ------- */
function P(pts){return pts.map(function(p){return p[0].toFixed(1)+' '+p[1].toFixed(1)}).join(' L ');}
function tab(a,t){var f=t*(a.length-1),i=Math.min(Math.floor(f),a.length-2),k=f-i;return [a[i][0]+(a[i+1][0]-a[i][0])*k,a[i][1]+(a[i+1][1]-a[i][1])*k];}
function shade(a,b,t){var c=Math.round(a+(b-a)*t);return 'rgb('+c+','+c+','+c+')';}

/* ------- left toolbar little triangles ------- */
(function(){var s='',R=[122,200,278,356,434,512,590,668,746,824,984,1062,1220,1298,1376,1454],L=[200,278,356,434,512,590,668,904,1220,1298,1376,1454];
R.forEach(function(y){s+='<path d="M183 '+(y-14)+' V'+y+' H169Z"/>'});L.forEach(function(y){s+='<path d="M104 '+(y-14)+' V'+y+' H90Z"/>'});document.getElementById('tris').innerHTML=s;})();

/* ------- rhino top toolbar ------- */
(function(){var s='',y=187;
function mag(x,c){return '<circle cx="'+(x+2)+'" cy="'+(y-4)+'" r="6" fill="'+(c||'#fff')+'" stroke="#555"/><path d="M'+(x-3)+' '+(y+2)+' L'+(x-8)+' '+(y+9)+'" stroke="#555" stroke-width="1.4"/>';}
function car(x,c){return '<path d="M'+(x-9)+' '+(y+5)+' V'+(y+1)+' L'+(x-4)+' '+y+' L'+(x-2)+' '+(y-4)+' H'+(x+4)+' L'+(x+6)+' '+y+' L'+(x+10)+' '+(y+1)+' V'+(y+5)+'Z" fill="'+c+'" stroke="#511" stroke-width=".6"/><rect x="'+(x-2)+'" y="'+(y-3)+'" width="5" height="3" fill="#eee"/><circle cx="'+(x-5)+'" cy="'+(y+5)+'" r="2" fill="#222"/><circle cx="'+(x+6)+'" cy="'+(y+5)+'" r="2" fill="#222"/>';}
function gc(x,c){return '<path d="M'+(x-8)+' '+(y+9)+' V'+(y+4)+' L'+(x-4)+' '+(y+3)+' L'+(x-2)+' '+y+' H'+(x+3)+' L'+(x+5)+' '+(y+3)+' L'+(x+8)+' '+(y+4)+' V'+(y+9)+'Z" fill="'+c+'" stroke="#444" stroke-width=".6"/>';}
s+='<path d="M22 199 C19 193 17 188 18 186 L21 189 L21 177 L23 177 L24 185 L25 175 L27 175 L28 185 L30 176 L32 177 L31 186 L34 180 L35 181 L33 192 L31 199 Z" fill="#fff" stroke="#555"/>';
s+='<circle cx="57" cy="187" r="7" fill="#fff" stroke="#999"/><ellipse cx="57" cy="187" rx="3" ry="11" fill="none" stroke="#777"/><path d="M47 187 H67" stroke="#999"/>';
s+=mag(89)+'<text x="88" y="186" font-size="9" fill="#333" font-family="Liberation Sans">±</text>';
s+='<path d="M106 180 V176 H110 M118 176 H122 V180 M106 192 V196 H110" fill="none" stroke="#222"/>'+mag(115);
s+='<path d="M133 177 H150 V194" fill="none" stroke="#222" stroke-dasharray="1.5 1.5"/>'+mag(141);
s+=mag(172,'#f0d340');
s+='<path d="M190 189 C190 179 199 175 206 179" fill="none" stroke="#333" stroke-width="2.4"/><path d="M206 175 L207 182 L201 180Z" fill="#333"/>'+mag(198);
s+='<path d="M206 196 H210 V200 H206Z" fill="#777"/>';
s+=mag(229)+'<rect x="234" y="194" width="4" height="4" fill="none" stroke="#333"/>';
s+=mag(255)+'<text x="253" y="186" font-size="7" fill="#222" font-family="Liberation Sans">1:1</text>';
s+='<path d="M272 174 V200 M474 174 V200 M648 174 V200 M793 174 V200 M968 174 V200" stroke="#b9bdc8"/>';
s+='<rect x="282" y="175" width="13" height="25" rx="3" fill="#e23a1d" stroke="#611"/><rect x="284" y="180" width="9" height="5" fill="#f8e6a0"/><rect x="284" y="191" width="9" height="4" fill="#f5a91f"/>';
s+='<rect x="309" y="175" width="13" height="25" rx="3" fill="#5d5d5d" stroke="#222"/><rect x="312" y="178" width="7" height="5" fill="#c9362a"/><rect x="312" y="192" width="7" height="5" fill="#c9362a"/>';
[343,372,400,428].forEach(function(x){s+=car(x,'#d92020')});
s+='<path d="M448 194 L460 177 L466 182 L454 199Z" fill="#d92020" stroke="#511"/><circle cx="454" cy="191" r="2" fill="#eee"/><circle cx="460" cy="185" r="2" fill="#eee"/>';
s+=gc(490,'#9a9a9a')+'<path d="M488 182 L498 175 L500 180" fill="#777" stroke="#333"/>';
s+='<rect x="508" y="180" width="21" height="17" rx="2" fill="#222"/><circle cx="518" cy="188" r="6" fill="#777" stroke="#ddd"/><rect x="512" y="176" width="8" height="5" fill="#333"/>';
s+=gc(546,'#999')+'<rect x="541" y="174" width="13" height="13" fill="#333"/><rect x="543" y="175" width="9" height="5" fill="#e0e0e0"/>';
s+='<rect x="572" y="175" width="17" height="14" fill="#2a5fb0" stroke="#123"/><path d="M564 188 H580 L578 200 H562Z" fill="#f0c940" stroke="#5a4400"/>';
s+='<circle cx="601" cy="185" r="6.500" fill="#aaa"/><path d="M590 198 L596 191 H606 L612 198Z" fill="none" stroke="#999"/>';
s+='<circle cx="628" cy="187" r="5" fill="#ccc"/><path d="M618 198 L624 192 H633 L639 198Z" fill="none" stroke="#aaa"/><text x="620" y="183" font-size="13" fill="#333" font-family="Liberation Sans">2</text>';
s+='<circle cx="663" cy="187" r="11" fill="#f2f2f2" stroke="#555"/><path d="M663 174 V182 M663 192 V200 M650 187 H658 M668 187 H676" stroke="#555"/>';
s+='<circle cx="692" cy="187" r="11" fill="#f2f2f2" stroke="#555"/><path d="M692 174 V180 M692 194 V200 M679 187 H685 M699 187 H705" stroke="#555"/><circle cx="693" cy="187" r="5" fill="#f0cd35" stroke="#8a6a00"/>';
s+='<path d="M720 174 V187 M716 178 H724" stroke="#333"/><path d="M710 196 H730 M712 192 H728" stroke="#aaa"/><path d="M714 188 H726" stroke="#c33" stroke-width="2"/>';
s+='<rect x="741" y="178" width="9" height="9" fill="#555" stroke="#222"/><path d="M750 190 L758 186 L760 198 L752 201Z" fill="#5a88e0" stroke="#123"/>';
s+='<path d="M766 178 L778 174 L790 179 L788 194 L777 202 L767 193Z" fill="#f4f4f4" stroke="#444"/><path d="M766 178 L778 184 L790 179 M778 184 L777 202 M771 176 L783 192 M785 176 L771 195" stroke="#666" fill="none"/>';
s+='<path d="M809 174 V201" stroke="#111" stroke-width="2"/><path d="M802 180 H816 M803 186 H815 M803 192 H815" stroke="#111" stroke-width="2"/><path d="M803 196 L809 203 L815 196" fill="#d33"/>';
s+='<path d="M837 174 V200" stroke="#333" stroke-width="2"/><rect x="829" y="181" width="16" height="7" fill="#ddd" stroke="#222"/><path d="M831 194 H843 M829 199 H845" stroke="#333"/>';
s+='<path d="M865 180 V196 M859 183 H871 M860 190 L865 186 L870 190" stroke="#444" fill="none"/><path d="M893 180 V196 M887 183 H899 M888 190 L893 186 L898 190" stroke="#444" fill="none"/>';
s+='<path d="M911 190 L916 183 L926 185 L932 181 L931 190 L922 194Z" fill="#2f5fc0" stroke="#123"/><path d="M939 189 L944 184 H954 L959 189 L954 194 H944Z" fill="#2f5fc0" stroke="#123"/><ellipse cx="949" cy="187" rx="4" ry="2.500" fill="#dfe8ff"/>';
s+='<path d="M972 186 C975 176 992 176 993 187 C993 193 986 196 982 194" fill="none" stroke="#222" stroke-width="1.8"/><path d="M977 198 L982 190 L985 198Z" fill="#222"/>';
s+='<circle cx="1011" cy="176" r="2.500" fill="#222"/><path d="M1011 179 L1009 190 L1005 201 M1010 190 L1015 201 M1006 184 L1015 186" stroke="#222" stroke-width="2" fill="none"/><path d="M1019 195 V201 H1013Z" fill="#8a8f99"/>';
s+='<path d="M1038 176 V200 M1026 188 H1046 M1030 180 L1045 196 M1045 180 L1030 196" stroke="#d86a6a"/>';
document.getElementById('rtools').innerHTML=s;})();

/* ------- viewport ------- */
(function(){var s='',i;
s+='<path d="M74 839 L1074 846 V1060 H74Z" fill="#fafafa"/>';
var N=70;for(i=0;i<N;i++){var t=i/N,yy=840+226*Math.pow(t,1.9);var c=(i%5==0)?'#dcdcdc':'#ebebeb';s+='<path d="M74 '+yy.toFixed(1)+' L1074 '+(yy+7).toFixed(1)+'" stroke="'+c+'" stroke-width=".9"/>';}
for(i=-80;i<=130;i++){var xb=74+i*13.5,vx=430,vy=520,xt=vx+(xb-vx)*(840-vy)/(1060-vy);c=(i%5==0)?'#dcdcdc':'#eeeeee';s+='<path d="M'+xt.toFixed(1)+' 841 L'+xb.toFixed(1)+' 1060" stroke="'+c+'" stroke-width=".9"/>';}
s+='<path d="M74 1029 L288 909" stroke="#4f8b4f" stroke-width="1.4"/>';
s+='<path d="M74 1046 L783 1060" stroke="#8d3f44" stroke-width="2"/>';
s+='<path d="M115 998 V1022 H140" fill="none" stroke="#999"/><path d="M115 1022 L104 1031" stroke="#bbb"/>';
s+='<text x="111" y="996" font-size="11" fill="#333" font-family="Liberation Sans">z</text><text x="112" y="1022" font-size="11" fill="#333" font-family="Liberation Sans">y</text><text x="142" y="1026" font-size="11" fill="#333" font-family="Liberation Sans">x</text>';

/* upper shelf: zoom-3 coordinates */
var up='';var LX=[558,565,570,578,585,593,602,611,622,632,642,653,664,675,686,697];
var RX=[1060,1085,1105,1125,1140,1160,1175,1195,1210,1220,1232,1243,1252,1258,1262,1268];
for(i=15;i>=0;i--){var tt=i/15,cx=860-70*tt,yb=838-tt*(838-445),cy=838-tt*(838-428),ry=838-tt*(838-452),h=26;
 up+='<path d="M '+P([[cx,cy],[RX[i]+7,ry],[RX[i]+7,ry-h],[cx,cy-h]])+' Z" fill="'+shade(140,178,tt)+'"/>';
 up+='<path d="M '+P([[LX[i],yb],[cx,cy],[cx,cy-h],[LX[i],yb-h]])+' Z" fill="'+shade(i==0?240:215,150,tt)+'"/>';
 var dx=709+56*tt,dx2=965+72*tt;
 up+='<path d="M'+dx+' '+(yb-h)+' V'+(yb+1)+' M'+dx2+' '+(cy-h)+' V'+(cy+1)+'" stroke-width="1"/>';
 up+='<path d="M '+P([[cx,cy-h*.5],[RX[i]+7,ry-h*.5]])+'" stroke-width=".7" stroke="#555" fill="none"/>';
}
s+='<g transform="translate(0 200) scale(0.35714)" stroke="#050505" stroke-width="2.200" style="stroke-linejoin:round">'+up.replace(/<path /g,'<path vector-effect="non-scaling-stroke" ')+'<path vector-effect="non-scaling-stroke" d="M697 420 L790 400 L1275 425" fill="none"/></g>';
/* column */
var C=[[775,790,'#e9e9e9'],[797,812,'#f2f2f2'],[815,830,'#8d8d8d'],[835,852,'#dcdcdc'],[870,885,'#7c7c7c'],[880,897,'#000']];
var col='';for(i=0;i<5;i++){col+='<path vector-effect="non-scaling-stroke" d="M'+C[i][0]+' 838 H'+C[i+1][0]+' L'+C[i+1][1]+' 1500 H'+C[i][1]+'Z" fill="'+C[i][2]+'"/>';}
col+='<path vector-effect="non-scaling-stroke" d="M785 1245 H888" stroke-width=".8"/>';
var colg='<g transform="translate(0 200) scale(0.35714)" stroke="#111" stroke-width="1.200">'+col+'</g>';

/* lower stack: zoom-9 coordinates */
var PT=[[258,148],[310,240],[352,300],[403,365],[458,425],[520,490],[585,550],[650,610],[720,665],[790,725],[830,750],[865,780]];
var LT=[[258,148],[252,195],[262,285],[275,345],[295,410],[305,450],[340,510],[378,578],[420,640],[470,705],[495,735],[525,770]];
var RT=[[805,122],[835,180],[870,255],[905,325],[930,380],[950,430],[975,500],[995,570],[1010,640],[1010,652],[935,715],[865,780]];
var lo='<path d="M322 470 L345 530 L372 590 H437 V700 L385 702 L372 710 H345 L322 702Z" fill="#d8d8d8"/><path d="M345 530 V710 M372 590 V710" /><path d="M322 470 V702 M345 530 H322" /><rect x="372" y="590" width="13" height="118" fill="#555"/><rect x="323" y="480" width="20" height="220" fill="#f0f0f0"/><rect x="348" y="530" width="22" height="175" fill="#e9e9e9"/>';
var n=27;
for(i=n-1;i>=0;i--){var t2=i/(n-1),p=tab(PT,t2),l=tab(LT,t2),r=tab(RT,t2),h2=26;
 var fb=t2>0.72?shade(115,80,(t2-.72)/.28):shade(160,125,t2/.72);
 lo+='<path d="M '+P([p,r,[r[0],r[1]-h2],[p[0],p[1]-h2]])+' Z" fill="'+fb+'"/>';
 lo+='<path d="M '+P([[p[0],p[1]-h2*.5],[r[0],r[1]-h2*.5]])+'" stroke-width=".9" stroke="#222" fill="none"/>';
 lo+='<path d="M '+P([l,p,[p[0],p[1]-h2],[l[0],l[1]-h2]])+' Z" fill="'+shade(160,228,t2)+'"/>';
 var mx=p[0]+(r[0]-p[0])*.5,my=p[1]+(r[1]-p[1])*.5,lx=l[0]+(p[0]-l[0])*.5,ly=l[1]+(p[1]-l[1])*.5;
 lo+='<path d="M'+mx.toFixed(1)+' '+(my-h2).toFixed(1)+' V'+my.toFixed(1)+' M'+lx.toFixed(1)+' '+(ly-h2).toFixed(1)+' V'+ly.toFixed(1)+'" stroke-width="1"/>';
}
var back='<path d="M '+P(LT)+' L '+P(RT.slice().reverse())+' Z" fill="#222"/>';
lo='<path d="M262 90 L775 70 L802 112 L258 130 Z" fill="#7e7e7e"/><path d="M420 85 L775 72 L795 105 L425 118Z" fill="#8f8f8f" stroke="none"/><path d="M660 103 H770 M700 97 H730 V109 H700Z" stroke-width="2" fill="none"/>'+lo.split('<path d="M 258')[0]+lo.slice(lo.split('<path d="M 258')[0].length);
s+='<g transform="translate(180 700) scale(.33333)" stroke="#0a0a0a" stroke-width="1.700" style="stroke-linejoin:round">'+(back+lo).replace(/<path /g,'<path vector-effect="non-scaling-stroke" ').replace(/<rect /g,'<rect vector-effect="non-scaling-stroke" ')+'</g>';
s+=colg;
document.getElementById('vp').innerHTML=s;})();

/* ------- GH ribbon icons ------- */
(function(){
var RED='#7a0c12',K='#111';
function w(d,c,sw){return '<path d="'+d+'" fill="none" stroke="'+(c||K)+'" stroke-width="'+(sw||5)+'" stroke-linecap="round"/>';}
function r(d){return w(d,RED,6);}
function dots(a){var s='';for(var i=0;i<a.length;i+=2)s+='<circle cx="'+a[i]+'" cy="'+a[i+1]+'" r="5.500" fill="#fff" stroke="#000" stroke-width="3"/>';return s;}
function circ(x,y,rr,c,sw){return '<circle cx="'+x+'" cy="'+y+'" r="'+rr+'" fill="none" stroke="'+(c||RED)+'" stroke-width="'+(sw||6)+'"/>';}
function f(d,c,st){return '<path d="'+d+'" fill="'+c+'" stroke="'+(st||'#333')+'" stroke-width="2"/>';}
var seps='<path d="M190 20 V255 M472 20 V255 M672 20 V255 M892 20 V255" stroke="#b4b4b4" stroke-width="3"/>';
var a=seps;
a+=w('M30 30 H75 V75 H30Z','#333',4)+circ(52,52,15)+dots([30,30,75,30,30,75,75,75]);
a+=w('M110 75 V50 L135 28 H162 V75Z',RED,6)+dots([110,75,110,50,135,28,162,28,162,75])+w('M132 48 H138 M135 45 V51','#333',2);
a+=w('M225 32 L257 60 L250 62',K,5)+r('M257 60 L285 40')+dots([225,32,257,60]);
a+=f('M305 78 C305 42 330 25 362 20 L362 40 C340 45 330 58 330 78Z','#ddd')+w('M312 58 L330 62 M320 42 L335 52 M335 30 L345 45','#333',2);
a+='<rect x="388" y="22" width="45" height="58" fill="#aaa" opacity=".6"/>'+w('M417 22 C395 45 432 55 410 80',RED,7);
a+=w('M510 25 V65 C510 72 518 72 525 70',K,5)+w('M497 38 H528',K,5)+w('M515 75 C530 65 535 35 560 25',RED,5)+dots([520,68]);
a+=w('M605 25 C590 60 610 75 635 75',K,3)+w('M600 50 H635',RED,3)+w('M603 32 L606 22 L612 30','#1d8a1d',3)+dots([605,50]);
a+=w('M705 72 C710 52 730 42 755 40',RED,5)+w('M717 56 C725 45 735 40 750 38',K,5)+dots([720,50,740,38]);
a+=circ(52,130,24)+w('M22 130 H82 M52 100 V160','#333',2)+dots([52,130]);
a+=w('M112 110 L155 160 M112 160 L155 110','#777',2)+w('M118 112 C165 120 105 150 150 158',RED,5)+dots([112,110,155,110,112,160,155,160]);
a+=w('M232 160 C237 130 255 120 275 118',K,5)+w('M220 135 L245 125','#1d8a1d',4)+w('M245 105 L240 130',"#c22",3)+w('M248 130 L256 140','#111',2)+dots([232,158,275,118]);
a+=circ(328,140,13)+'<rect x="305" y="103" width="10" height="10" fill="#bbb" stroke="#333" stroke-width="2"/><rect x="353" y="103" width="10" height="10" fill="#bbb" stroke="#333" stroke-width="2"/><rect x="344" y="152" width="12" height="12" fill="#3fae3f" stroke="#133" stroke-width="2"/>'+w('M312 112 L325 128 M357 112 L340 128','#333',2);
a+=w('M392 140 C405 112 420 150 445 132',K,5)+w('M428 112 V130','#1d8a1d',3)+w('M405 160 V142','#c22',3)+dots([392,140,445,132,415,132]);
a+=w('M505 160 C510 130 530 115 560 110',RED,6)+w('M525 130 C530 115 540 110 560 110','#e08020',5)+w('M508 110 L528 130 M530 130 L548 148',K,3)+dots([520,125]);
a+=w('M590 110 L640 160 M640 110 L590 160',K,3)+w('M592 132 H640',RED,5)+dots([615,135]);
a+=w('M715 160 C715 125 730 115 755 115',K,5)+w('M735 160 C735 135 745 130 755 130',RED,5)+w('M708 150 L715 165 L722 150',K,3)+w('M748 108 L758 115 L748 122',K,3);
a+=w('M28 240 C55 240 40 195 75 195',RED,6)+dots([28,240,75,195]);
a+=w('M110 195 H160 V240 H110Z',RED,6)+'<path d="M100 217 H170 M135 185 V250" stroke="#333" stroke-dasharray="4 4" stroke-width="2"/>'+dots([135,217]);
a+=w('M222 217 H240 M234 211 L242 217 L234 223',K,3)+'<ellipse cx="258" cy="217" rx="15" ry="26" fill="none" stroke="'+RED+'" stroke-width="6"/>';
a+=w('M305 190 C335 215 335 215 305 245 M360 190 C330 215 330 215 360 245',RED,6)+w('M305 190 C325 205 332 215 345 228',K,4)+dots([320,225,345,228]);
a+=f('M393 218 L428 198 L447 215 L420 246Z','#f2a51e','#333')+w('M395 205 L410 200 L425 205 C415 218 430 235 410 245',K,4);
a+=w('M500 215 H528 M508 208 L500 215 L508 222',K,3)+circ(538,215,11,'#333',3)+w('M530 190 C560 210 560 225 530 245',RED,6)+dots([540,215]);
a+=f('M595 240 L610 212 H632 L642 240Z','#f2a51e')+w('M618 225 V195 M610 203 L618 192 L626 203',K,4)+w('M590 208 C605 195 620 195 640 210',RED,3);
a+=w('M700 245 L762 190',RED,6)+w('M702 218 L730 192 M702 206 V220 H716 M722 192 H732 V202',K,3);
a+=w('M815 72 L835 60 L838 42 L860 30',K,5)+dots([815,72,836,60,838,42,860,30]);
a+=f('M930 60 H975 V82 H930Z','#f29a1e','#8a2a00')+f('M936 45 H968 V60 H936Z','#f29a1e','#8a2a00')+w('M930 70 H975','#8a2a00',3)+w('M950 20 V42',K,6)+dots([950,42]);
a+='<g fill="#111">';[[862,110],[852,118],[840,112],[830,122],[838,132],[825,132],[820,145],[815,158]].forEach(function(p){a+='<circle cx="'+p[0]+'" cy="'+p[1]+'" r="3.500"/>'});a+='</g>';
a+=f('M932 125 L950 118 V150 L932 158Z','#f2a51e','#8a2a00')+f('M945 118 L962 110 V142 L945 150Z','#f2a51e','#8a2a00')+f('M955 115 L972 108 V138 L955 146Z','#f2a51e','#8a2a00')+w('M925 165 L975 110',K,4);
a+=w('M820 240 C842 232 838 205 865 195','#a54',4)+'<path d="M818 200 L850 240" stroke="#999" stroke-width="6" opacity=".5"/>'+w('M850 240 L862 228 M852 228 H862 V238',K,2);
a+=w('M925 240 H980 M930 225 L975 225 M925 240 L945 200 L945 215 M945 240 L965 200',RED,2)+w('M930 240 V195 M945 235 V195 M960 225 V195','#1d8a1d',3);
a+=w('M1042 68 L1085 28',K,5)+dots([1042,68,1085,28]);
a+=w('M1120 25 H1178 L1120 72 H1178Z',K,4)+w('M1148 14 V30 M1148 65 V80',K,3)+dots([1148,48,1120,48,1178,48]);
a+=w('M1040 155 L1085 112',K,6)+w('M1070 108 L1088 108 L1088 126',K,4)+w('M1045 155 H1078 M1068 132 L1080 155','#999',2);
a+=w('M1115 158 L1135 140 L1160 112 L1185 140',K,3)+dots([1115,158,1135,140,1160,112,1185,140]);
a+=w('M1038 240 L1085 192',K,5)+dots([1038,240,1048,230,1058,222,1068,210,1085,192]);
a+=circ(1150,205,20)+w('M1120 245 L1133 195 M1120 245 L1170 218',K,5)+dots([1120,245,1135,222,1155,228]);
var b='<path d="M92 20 V255 M290 20 V255 M680 20 V255 M985 20 V255" stroke="#b4b4b4" stroke-width="3"/>';
b+=circ(20,65,11)+circ(50,37,16)+w('M28 55 L40 47',K,3)+dots([20,65,36,48]);
b+=circ(20,148,10)+circ(50,118,14)+w('M25 140 L40 128',K,3)+dots([28,138,38,125]);
b+='<rect x="125" y="25" width="50" height="50" fill="#f29a1e" stroke="#8a2a00" stroke-width="3"/>'+circ(150,50,15,'#222',4)+w('M150 36 V50 H168',K,4);
b+=circ(232,50,22,K,5)+dots([232,28,212,38,212,62,232,72,252,62,252,38]);
b+=w('M325 68 C325 22 372 22 372 55',K,6)+dots([325,68,372,55]);
b+=circ(150,133,19,K,6)+dots([130,133,170,133]);
b+=circ(232,133,19,K,6)+w('M208 110 C222 130 222 140 208 160 M255 128 L262 133',RED,6)+dots([215,133,232,114]);
b+=w('M325 150 C360 155 365 130 352 112 H372 M364 104 L376 112 L364 120',K,6)+dots([325,150]);
b+=circ(148,222,19,K,6)+w('M148 222 L170 198 M158 194 H174 V210',K,5)+dots([148,222]);
b+=circ(232,215,19,K,6)+w('M208 192 C222 212 222 225 208 248',RED,6)+circ(248,235,9)+dots([218,200,245,200]);
b+='<rect x="322" y="193" width="53" height="52" fill="#f29a1e" stroke="#8a2a00" stroke-width="3"/>'+w('M333 225 C333 200 365 200 365 225 H333',K,5);
b+=w('M435 30 H480 M455 30 L458 75 M435 75 H488',K,6)+dots([480,30,435,75]);
b+=w('M520 72 L535 35 L565 30 L565 60',K,6)+dots([520,72,535,35,565,30,565,60]);
b+=w('M605 30 C650 18 650 55 625 55 C600 55 625 85 640 70',K,6)+dots([605,30,640,70]);
b+=w('M712 72 C730 18 750 18 765 72',K,6)+w('M712 72 L722 48 M765 72 L755 48',RED,6);
b+=w('M430 150 C425 115 480 110 480 135 C480 160 445 160 450 135',K,6)+dots([430,150,480,135,450,135]);
b+=w('M512 110 H548 L530 155 H565',K,6)+w('M520 100 H560 M550 93 L562 100 L550 107 M512 160 H555 M522 153 L510 160 L522 167',RED,2)+dots([512,110,548,112,530,155,565,158]);
b+=w('M600 120 C602 165 625 160 630 135 C635 110 650 110 655 150',K,6)+w('M600 108 V158 M645 108 V158',RED,2);
b+=w('M712 110 C720 140 750 140 765 120',K,6)+f('M728 145 H752 L740 162Z','#fff','#111')+dots([712,110,765,120]);
b+=w('M430 195 C485 195 485 240 430 240',K,6)+w('M475 192 V245','#999',2)+dots([430,195,430,240,475,192,475,240]);
b+=w('M512 235 L540 205 L570 235','#333',4)+w('M520 225 C535 245 550 245 565 225',RED,4)+dots([540,205]);
b+=w('M770 190 L720 222 L770 245',K,6)+w('M770 190 L752 200 M770 245 L750 235',RED,6);
b+=w('M835 25 C858 35 830 55 855 70',K,6)+w('M862 38 L840 45 M862 45 L845 52','#999',2);
b+=w('M905 75 L960 25',RED,6)+w('M915 35 L930 48 M950 65 L935 50',K,3);
b+=w('M825 140 C825 110 872 110 872 130 C872 155 845 150 845 138',RED,6)+w('M828 148 L838 152',K,3);
b+=w('M820 228 C845 200 860 210 872 195',RED,6)+w('M830 246 C855 215 862 230 875 210',K,6);
b+='<circle cx="1042" cy="48" r="25" fill="#eee" stroke="#777" stroke-width="2"/>'+w('M1015 75 V25 H1070',K,6)+dots([1015,75,1070,22])+w('M1037 48 H1047 M1042 43 V53','#333',2);
b+=w('M1100 40 H1158 M1115 25 V75',K,6)+'<path d="M1115 40 H1145 V75 H1115" fill="none" stroke="#555" stroke-width="2" stroke-dasharray="4 3"/>'+dots([1145,62]);
b+=w('M1020 160 C1020 125 1040 115 1075 115',K,6)+w('M1040 158 C1045 140 1060 130 1075 130',RED,6)+dots([1020,160,1075,115,1060,132]);
b+=w('M1112 112 C1150 115 1160 155 1112 160',K,5)+w('M1148 112 C1162 130 1162 145 1148 160',K,3)+w('M1112 135 H1145 M1135 127 L1146 135 L1135 143',RED,5)+dots([1112,112,1112,160,1148,112,1148,160]);
b+=w('M1015 190 L1040 215 L1070 195 M1040 215 L1020 245',K,6)+'<circle cx="1052" cy="228" r="16" fill="none" stroke="#777" stroke-width="2"/>'+dots([1015,190,1070,195,1020,245])+'<circle cx="1052" cy="228" r="2.500" fill="#222"/>';
b+=f('M1100 218 L1130 192 L1158 200 L1150 245 L1105 240Z','#e6e6e6','#666')+w('M1112 212 C1125 200 1140 205 1155 208 M1110 225 C1125 215 1140 215 1152 220',RED,5)+w('M1108 232 C1125 226 1140 228 1150 232',K,3);
document.getElementById('ribbon').innerHTML='<g transform="translate(1048 125) scale(.33333)">'+a+'</g><g transform="translate(1445 125) scale(.33333)">'+b+'</g>';
})();

/* ------- GH canvas ------- */
(function(){
var X6=function(x){return 1060+x/3},Y6=function(y){return 370+y/3},X7=function(x){return 1180+x/2.24},Y7b=function(y){return 660+y/3},X8=function(x){return 1550+x/3};
var grp='',nodes='';
function G(x1,y1,x2,y2){grp+='<rect x="'+x1+'" y="'+y1+'" width="'+(x2-x1)+'" height="'+(y2-y1)+'" fill="#b5a0e4" stroke="#9e8ccb" stroke-width="1.400"/>';}
function N(x1,y1,x2,y2,d1,d2,o){o=o||{};var st=o.st||'#646464';
 nodes+='<rect x="'+x1+'" y="'+y1+'" width="'+(x2-x1)+'" height="'+(y2-y1)+'" fill="'+(o.side||'#cacaca')+'" stroke="'+st+'" stroke-width="1.300"/>';
 nodes+='<rect x="'+d1+'" y="'+(y1+.5)+'" width="'+(d2-d1)+'" height="'+(y2-y1-1)+'" fill="#343434"/>';}
function S(x1,y1,x2,y2,xd,c,c2){nodes+='<rect x="'+x1+'" y="'+y1+'" width="'+(x2-x1)+'" height="'+(y2-y1)+'" fill="'+(c2||'#c9c9c9')+'" stroke="#3a3a3a" stroke-width="1"/><rect x="'+x1+'" y="'+y1+'" width="'+(xd-x1)+'" height="'+(y2-y1)+'" fill="'+(c||'#8c8c96')+'" stroke="#3a3a3a" stroke-width="1"/>';}
function Wh(x1,y1,x2,y2){nodes+='<rect x="'+x1+'" y="'+y1+'" width="'+(x2-x1)+'" height="'+(y2-y1)+'" fill="#fff" stroke="#333" stroke-width="1.200"/>';}
function n6(a,b,c,d,e,f,o){N(X6(a),Y6(b),X6(c),Y6(d),X6(e),X6(f),o)}
function n7(a,b,c,d,e,f,o){N(X7(a),Y7b(b),X7(c),Y7b(d),X7(e),X7(f),o)}
function n8(a,b,c,d,e,f,o){N(X8(a),Y6(b),X8(c),Y6(d),X8(e),X8(f),o)}
var GS={side:'#8f8f98'};
G(1086,534,1166,663);G(1113,637,1143,659);G(1186.700,457.700,1238,518.300);G(1363,462,1501,508);G(1363.700,560,1535,620.700);G(1194,667,1350.700,771.700);G(1195.600,776,1412,873);G(1441.600,795,1564.800,864);G(1564,727.700,1588.500,759);G(1704.500,667,1805,741.700);
var frame='<path d="M1079.500 1065 V426.500 H1868" fill="none" stroke="#000" stroke-width="1.400"/>';
var w6=['M525 305 C650 305 800 310 920 315','M525 305 C620 305 800 330 920 330','M525 305 C700 310 900 470 1177 660','M525 360 C650 360 800 350 920 350','M525 385 C800 385 850 460 1050 560 C1150 610 1250 605 1346 605','M525 403 C800 403 900 470 1177 645','M525 323 C570 320 560 210 604 203','M525 305 C570 300 570 230 604 225','M675 225 C710 225 720 212 745 212','M388 350 C320 350 330 380 335 430 C345 480 345 510 340 570','M388 405 C330 410 340 470 335 480 C340 530 345 540 330 560','M284 541 C420 541 600 480 720 400 C790 355 850 360 920 345','M294 572 C430 580 580 640 585 720 C590 830 470 1030 340 1240','M284 541 C370 540 560 570 575 700 C585 800 520 970 470 1020','M305 635 C450 600 600 450 720 400 C790 365 860 350 920 340','M250 636 C340 640 430 680 430 760 C430 850 330 1100 270 1260','M250 636 C370 640 410 700 415 760 C415 850 300 1100 250 1260','M250 636 C330 640 400 640 410 780 C410 860 420 960 526 950','M250 636 C350 650 400 720 400 800 C400 860 440 1030 530 1045','M253 707 C340 700 380 780 385 850 C390 900 400 915 412 945','M240 835 C330 835 380 870 410 930','M240 835 C320 835 390 870 400 930 C420 1000 450 1100 470 1240','M181 700 C150 700 140 720 180 725','M175 735 C120 770 110 800 140 825 L170 825','M253 707 C290 690 300 660 340 625 C350 610 330 605 305 605','M988 325 L1090 322','M988 350 C1040 340 1040 300 1090 300','M988 345 L1090 345','M1158 312 C1200 312 1210 300 1243 300','M1313 330 L1252 362','M1090 370 C1130 395 1170 415 1190 430','M1313 315 C1350 380 1420 500 1500 620','M1407 180 C1320 180 1280 200 1290 270 L1296 290','M1087 628 C1120 628 1150 640 1177 660','M1087 655 L1177 670','M922 665 C960 670 970 700 1018 705','M1082 705 C1130 705 1130 688 1177 688','M1247 670 C1290 670 1300 648 1342 648','M1247 688 C1330 760 1400 800 1500 850','M1215 703 C1300 800 1400 890 1500 945','M1415 665 C1450 665 1480 655 1500 640','M1400 728 C1450 725 1480 715 1500 700','M1080 615 C1200 550 1350 470 1500 395','M480 948 L526 940','M480 955 L526 960','M595 925 C630 930 640 935 664 955','M742 975 L793 975','M601 1045 C630 1040 625 985 664 985','M861 975 C950 975 980 1075 1094 1075','M742 975 C780 980 750 1030 650 1100','M610 1045 C680 1050 750 1070 790 1109','M718 1105 C760 1105 720 1150 765 1145','M647 1120 C610 1130 620 1145 647 1140','M832 1150 C880 1150 860 1165 832 1165','M718 1105 C800 1110 1000 1150 1180 1260','M840 1000 C880 1050 890 1150 880 1260','M560 995 C580 1050 550 1150 565 1260','M647 1160 L430 1240','M765 1180 L500 1230','M832 1155 L930 1260','M1094 1100 C1030 1100 1020 1130 1060 1190 L1090 1260','M1164 1085 L1500 1093','M1500 1150 L1180 1260'];
var w7=['M375 105 C450 110 480 205 548 205','M600 215 C700 220 800 222 867 222','M548 230 C500 230 500 260 515 310 C540 380 580 470 513 483','M345 125 C420 250 380 480 385 600 C385 800 500 860 595 862','M904 222 C980 225 1100 210 1181 90','M904 225 C1000 215 1100 210 1184 185','M908 278 C940 278 970 270 997 265','M904 222 C940 225 960 245 997 250','M1050 250 C1100 230 1140 150 1181 85','M1050 255 C1100 240 1140 200 1184 195','M570 420 C660 370 800 300 930 230 C935 225 920 222 904 230','M570 420 C570 430 585 428 592 430','M382 250 C470 290 540 390 600 420','M860 435 C900 430 860 330 845 300 C843 290 850 280 870 272','M646 430 L717 445','M646 435 L717 455','M770 445 C785 440 785 430 802 430','M717 470 C690 490 730 530 725 570 L707 590','M657 590 C600 590 560 560 513 525','M105 395 C60 380 30 385 50 395','M0 365 L50 375','M50 400 C30 410 30 420 50 415','M110 485 C180 470 180 405 246 402','M105 420 C130 480 170 490 230 495','M105 395 C130 440 180 445 230 450','M148 125 C150 200 140 370 180 410 L246 420','M282 470 C310 470 300 490 327 470','M297 412 C330 430 300 500 327 510','M384 510 L397 510','M448 510 L460 510','M151 590 C200 590 260 605 318 605','M382 600 C420 600 420 550 436 527','M78 615 L100 585','M0 545 C30 575 60 580 100 580','M0 460 L55 465','M0 495 L55 500','M165 175 C250 185 290 200 300 240','M105 350 C170 330 180 300 215 295','M100 360 L300 280','M90 360 C70 250 80 180 65 95','M1232 60 C1260 45 1300 45 1325 42','M1232 65 C1260 60 1290 55 1325 50','M1231 80 L1325 85','M1235 180 C1270 170 1300 170 1336 165','M1235 195 C1270 195 1300 225 1336 225','M1325 85 C1240 85 1200 120 1195 167','M1336 205 C1280 210 1230 250 1225 300','M1336 225 C1280 235 1215 260 1225 330','M1195 220 C1200 300 1270 500 1290 620 C1300 700 1240 768 1175 768','M1200 220 C1210 320 1260 500 1285 620 C1295 700 1235 768 1175 768','M1225 300 C1220 400 1310 550 1305 650 C1300 720 1240 765 1175 768','M1225 320 C1225 400 1300 550 1295 640 C1290 720 1235 768 1175 768','M1124 768 C950 768 800 800 645 855','M640 857 L516 895','M180 938 C220 930 230 895 262 900','M315 908 C340 900 340 860 363 862','M180 938 L363 930','M415 898 C430 895 440 880 460 880','M415 915 L460 915','M516 900 L595 900','M359 990 C370 980 350 950 360 935','M770 0 C850 80 1000 130 1181 95','M880 0 C950 40 1050 70 1181 75'];
var w8=['M11 355 C100 355 150 330 258 328','M220 368 L258 368','M258 388 C170 395 120 440 100 510 C85 570 50 650 0 660','M258 408 C170 410 120 470 100 520 C90 570 50 700 0 718','M73 462 C110 470 110 510 146 515','M0 540 C40 600 60 680 0 715','M0 415 C30 395 50 375 55 362 C50 355 30 360 0 415','M0 830 C130 900 300 945 470 945'];
function paths(arr,c,sw){return arr.map(function(d){return '<path vector-effect="non-scaling-stroke" d="'+d+'" fill="none" stroke="'+c+'" stroke-width="'+sw+'"/>'}).join('');}
var WC='#5a5a55',WW=1;
var wires='<g transform="translate(1060 370) scale(.33333)">'+paths(w6,WC,WW)+paths(['M308 513 C450 520 590 590 590 690 C590 800 480 1020 310 1260','M388 305 C320 300 330 340 340 400 C350 480 370 480 340 520'],'#9ab84a',WW)+'</g>';
wires+='<g transform="translate(1180 660) scale(.44643 .33333)">'+paths(w7,WC,WW)+'</g>';
wires+='<g transform="translate(1550 370) scale(.33333)">'+paths(w8,WC,WW)+'</g>';
wires+=paths(['M1175 680 C1130 780 1110 880 1130 925 C1150 960 1190 950 1214 950'],'#a8a89a',WW)+paths(['M1160 790 C1125 850 1110 930 1140 960 C1165 985 1190 965 1214 965','M1150 790 C1125 860 1115 960 1150 975 C1175 985 1190 980 1214 980','M1152 740 C1150 760 1170 780 1202 782','M1185 700 C1155 780 1130 900 1145 975','M1178 720 C1150 790 1120 860 1125 920'],WC,WW);
n6(604,178,675,277,625,650);n6(745,190,812,235,765,790);n6(388,274,525,435,465,490);n6(920,312,988,388,942,965,{side:'#c40000',st:'#7a1b1b'});n6(1090,287,1158,382,1110,1135);n6(1243,290,1313,337,1265,1290,GS);n6(1232,362,1300,407,1252,1277);
S(X6(1018),Y6(421),X6(1190),Y6(443),X6(1070));
S(X6(922),Y6(619),X6(1087),Y6(638),X6(963));S(X6(922),Y6(646),X6(1087),Y6(665),X6(963));
n6(1018,685,1082,730,1036,1060);n6(1177,638,1247,703,1197,1222,GS);n6(1346,580,1415,629,1366,1390,GS);n6(1342,634,1415,699,1362,1388);n6(1333,714,1400,743,1352,1376,GS);
S(X6(100),Y6(503),X6(308),Y6(523),X6(152),'#4ba518','#7fd53a');S(X6(93),Y6(532),X6(284),Y6(551),X6(167));S(X6(90),Y6(562),X6(294),Y6(583),X6(167));S(X6(94),Y6(596),X6(305),Y6(616),X6(187));
Wh(X6(175),Y6(621),X6(250),Y6(653));n6(181,675,253,739,200,225);n6(170,811,240,860,190,215);
n6(412,930,480,966,433,460);n6(526,902,595,995,547,572);Wh(X6(454),Y6(981),X6(502),Y6(1003));n6(664,935,742,1017,693,720);n6(793,953,861,998,814,838);n6(533,1025,601,1068,555,578);n6(647,1092,718,1194,667,692);n6(765,1109,832,1186,785,810);
n6(1094,1059,1164,1114,1116,1140);
nodes+='<rect x="1529" y="383.500" width="84" height="93.500" fill="#fff" stroke="#6b6b66" stroke-width="1.400"/>';
n8(3,440,73,523,24,49);n8(258,316,336,419,286,311);n8(146,478,215,552,168,190);Wh(X8(72),Y6(547),X8(122),Y6(568));
S(X8(170),Y6(358),X8(220),Y6(378),X8(170));S(X6(1432),Y6(345),X6(1482),Y6(365),X6(1432));
n7(50,358,105,420,65,85);n7(246,389,297,434,262,282);n7(55,452,110,516,72,90);n7(230,440,282,533,245,265);n7(327,460,384,542,349,369);n7(397,481,448,527,412,431);n7(460,469,513,530,476,496);n7(100,567,151,613,115,134);n7(318,590,382,618,343,363,GS);Wh(X7(40),Y7b(598),X7(78),Y7b(632));
n7(592,415,646,481,608,628);n7(596,490,648,527,612,632);n7(717,424,770,484,733,752);n7(802,415,855,497,818,838);n7(657,575,707,604,672,690,GS);
S(X7(867),Y7b(212),X7(904),Y7b(233),X7(867));S(X7(870),Y7b(268),X7(908),Y7b(288),X7(870));
n7(997,218,1050,285,1012,1032);n7(548,189,600,243,563,583);
n7(1181,47,1231,103,1197,1216);n7(1325,30,1382,114,1346,1365);n7(1184,167,1233,222,1198,1217);n7(1336,154,1392,238,1358,1378);n7(1124,740,1175,796,1140,1160);
n7(77,848,180,990,134,155);n7(262,881,315,938,278,297);n7(363,838,415,958,379,398);n7(460,867,516,949,482,500,{side:'#ff8a10',st:'#a84a00'});n7(595,846,645,918,610,630);S(X7(234),Y7b(982),X7(359),Y7b(1003),X7(270));
var dial='<path d="M1099 1062 C1099 1047 1108 1038 1119 1037 C1131 1038 1141 1048 1141 1062 Z" fill="#d9d9d9" stroke="#999"/><path d="M1117 1038 C1128 1036 1140 1046 1141 1062" fill="none" stroke="#111" stroke-width="2"/><path d="M1118 1029 L1121 1034 L1118 1039 L1115 1034Z" fill="#111"/><path d="M1111 1045 L1115 1050 M1126 1045 L1122 1050" stroke="#fff" stroke-width="2"/>';
document.getElementById('gh').innerHTML=grp+frame+wires+nodes+dial;
})();
</script>
</body>
</html>
